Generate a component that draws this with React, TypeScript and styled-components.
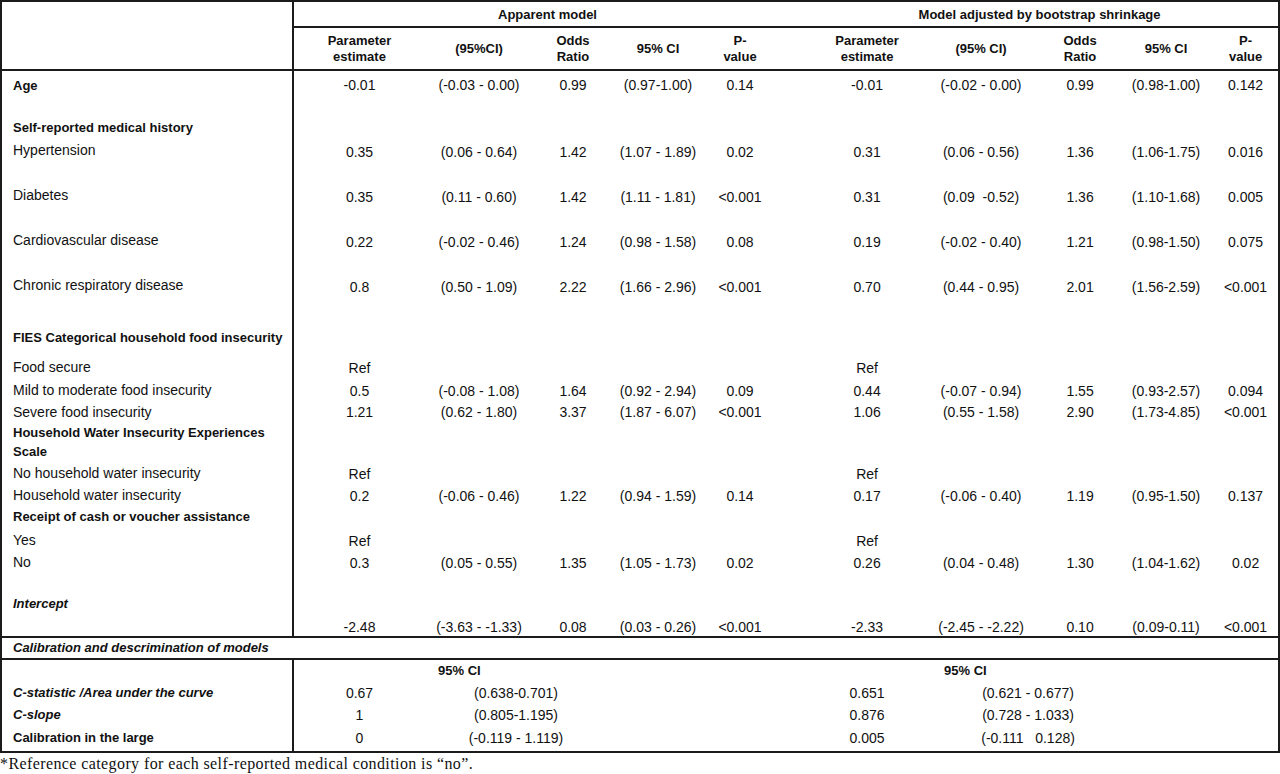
import React from 'react';
import styled, { createGlobalStyle } from 'styled-components';

const GlobalStyle = createGlobalStyle`
  html, body {
    margin: 0;
    padding: 0;
    background: #fff;
  }
`;

const LINE = '2px solid #1b1b1b';

// widths of the 11 columns: label + 5 apparent + 5 adjusted
const colWidths = [292, 132, 108, 80, 90, 98, 132, 96, 102, 70, 78];
// horizontal nudge of a column's centred text (P-value columns sit off-centre)
const colShift = [0, 0, 0, 0, 0, -12, 0, 0, 0, 0, 6];

interface Row {
  label: string;
  bold?: boolean;
  italic?: boolean;
  height: number;
  padTop?: number;
  valuesTop?: number;
  values?: string[];
}

const ref = ['Ref', '', '', '', '', 'Ref', '', '', '', ''];

const rows: Row[] = [
  {
    label: 'Age',
    bold: true,
    height: 46,
    padTop: 3,
    values: ['-0.01', '(-0.03 - 0.00)', '0.99', '(0.97-1.00)', '0.14', '-0.01', '(-0.02 - 0.00)', '0.99', '(0.98-1.00)', '0.142'],
  },
  { label: 'Self-reported medical history', bold: true, height: 23 },
  {
    label: 'Hypertension',
    height: 45,
    valuesTop: 2,
    values: ['0.35', '(0.06 - 0.64)', '1.42', '(1.07 - 1.89)', '0.02', '0.31', '(0.06 - 0.56)', '1.36', '(1.06-1.75)', '0.016'],
  },
  {
    label: 'Diabetes',
    height: 45,
    valuesTop: 2,
    values: ['0.35', '(0.11 - 0.60)', '1.42', '(1.11 - 1.81)', '<0.001', '0.31', '(0.09  -0.52)', '1.36', '(1.10-1.68)', '0.005'],
  },
  {
    label: 'Cardiovascular disease',
    height: 45,
    valuesTop: 2,
    values: ['0.22', '(-0.02 - 0.46)', '1.24', '(0.98 - 1.58)', '0.08', '0.19', '(-0.02 - 0.40)', '1.21', '(0.98-1.50)', '0.075'],
  },
  {
    label: 'Chronic respiratory disease',
    height: 52,
    valuesTop: 2,
    values: ['0.8', '(0.50 - 1.09)', '2.22', '(1.66 - 2.96)', '<0.001', '0.70', '(0.44 - 0.95)', '2.01', '(1.56-2.59)', '<0.001'],
  },
  { label: 'FIES Categorical household food insecurity', bold: true, height: 30 },
  { label: 'Food secure', height: 23, valuesTop: 1, values: ref },
  {
    label: 'Mild to moderate food insecurity',
    height: 22,
    valuesTop: 1,
    values: ['0.5', '(-0.08 - 1.08)', '1.64', '(0.92 - 2.94)', '0.09', '0.44', '(-0.07 - 0.94)', '1.55', '(0.93-2.57)', '0.094'],
  },
  {
    label: 'Severe food insecurity',
    height: 20,
    values: ['1.21', '(0.62 - 1.80)', '3.37', '(1.87 - 6.07)', '<0.001', '1.06', '(0.55 - 1.58)', '2.90', '(1.73-4.85)', '<0.001'],
  },
  { label: 'Household Water Insecurity Experiences Scale', bold: true, height: 41 },
  { label: 'No household water insecurity', height: 22, valuesTop: 1, values: ref },
  {
    label: 'Household water insecurity',
    height: 21,
    valuesTop: 1,
    values: ['0.2', '(-0.06 - 0.46)', '1.22', '(0.94 - 1.59)', '0.14', '0.17', '(-0.06 - 0.40)', '1.19', '(0.95-1.50)', '0.137'],
  },
  { label: 'Receipt of cash or voucher assistance', bold: true, height: 24 },
  { label: 'Yes', height: 22, valuesTop: 1, values: ref },
  {
    label: 'No',
    height: 41,
    valuesTop: 1,
    values: ['0.3', '(0.05 - 0.55)', '1.35', '(1.05 - 1.73)', '0.02', '0.26', '(0.04 - 0.48)', '1.30', '(1.04-1.62)', '0.02'],
  },
  {
    label: 'Intercept',
    bold: true,
    italic: true,
    height: 45,
    valuesTop: 24,
    values: ['-2.48', '(-3.63 - -1.33)', '0.08', '(0.03 - 0.26)', '<0.001', '-2.33', '(-2.45 - -2.22)', '0.10', '(0.09-0.11)', '<0.001'],
  },
];

interface CalRow {
  label: string;
  italic: boolean;
  height: number;
  est: [string, string];
  ci: [string, string];
}

const calRows: CalRow[] = [
  { label: 'C-statistic /Area under the curve', italic: true, height: 22, est: ['0.67', '0.651'], ci: ['(0.638-0.701)', '(0.621 - 0.677)'] },
  { label: 'C-slope', italic: true, height: 23, est: ['1', '0.876'], ci: ['(0.805-1.195)', '(0.728 - 1.033)'] },
  { label: 'Calibration in the large', italic: false, height: 26, est: ['0', '0.005'], ci: ['(-0.119 - 1.119)', '(-0.111   0.128)'] },
];

const Page = styled.div`
  width: 1280px;
  color: #111;
`;

const Table = styled.table`
  border-collapse: collapse;
  table-layout: fixed;
  width: 1279px;
  border: ${LINE};
  font-family: 'Liberation Sans', Arial, sans-serif;
  font-size: 14px;
`;

const HeadRow = styled.tr<{ $height: number }>`
  height: ${(p) => p.$height}px;
`;

const GroupHead = styled.th<{ $ruled?: boolean }>`
  padding: 0;
  font-size: 13px;
  font-weight: bold;
  text-align: center;
  vertical-align: middle;
  border-bottom: ${(p) => (p.$ruled ? LINE : 'none')};
`;

const ColHead = styled.th`
  padding: 0;
  font-size: 13px;
  font-weight: bold;
  line-height: 16px;
  text-align: center;
  vertical-align: middle;
  border-bottom: ${LINE};
  white-space: nowrap;
`;

const Corner = styled.th`
  padding: 0;
  border-right: ${LINE};
  border-bottom: ${LINE};
`;

const BodyRow = styled.tr<{ $height: number; $ruled?: boolean }>`
  height: ${(p) => p.$height}px;
  border-bottom: ${(p) => (p.$ruled ? LINE : 'none')};
`;

const Label = styled.td<{ $bold?: boolean; $italic?: boolean; $padTop?: number }>`
  padding: ${(p) => (p.$padTop ?? 0) + 2}px 6px 0 11px;
  vertical-align: top;
  border-right: ${LINE};
  font-size: ${(p) => (p.$bold ? '13px' : '14px')};
  font-weight: ${(p) => (p.$bold ? 'bold' : 'normal')};
  font-style: ${(p) => (p.$italic ? 'italic' : 'normal')};
  line-height: ${(p) => (p.$bold ? '19px' : '18px')};
`;

const Value = styled.td<{ $padTop?: number }>`
  padding: ${(p) => (p.$padTop ?? 0) + 2}px 0 0 0;
  vertical-align: top;
  text-align: center;
  line-height: 18px;
  white-space: pre;
`;

const Nudge = styled.span`
  display: inline-block;
`;

const Banner = styled.td`
  padding: 0 11px;
  height: 20px;
  font-size: 13px;
  font-weight: bold;
  font-style: italic;
  line-height: 20px;
  vertical-align: middle;
`;

const CiHead = styled.td`
  padding: 0 0 0 13px;
  font-size: 13px;
  font-weight: bold;
  line-height: 20px;
  text-align: left;
  white-space: nowrap;
`;

const Footnote = styled.p`
  margin: 1px 0 0 0;
  font-family: 'Liberation Serif', 'Times New Roman', serif;
  font-size: 16px;
  letter-spacing: 0.4px;
  line-height: 19px;
  color: #111;
`;

const Cell: React.FC<{ col: number; top?: number; children: React.ReactNode }> = ({ col, top, children }) => (
  <Value $padTop={top}>
    <Nudge style={{ transform: `translateX(${colShift[col]}px)` }}>{children}</Nudge>
  </Value>
);

const headers = [
  ['Parameter', 'estimate'],
  ['(95%CI)'],
  ['Odds', 'Ratio'],
  ['95% CI'],
  ['P-', 'value'],
  ['Parameter', 'estimate'],
  ['(95% CI)'],
  ['Odds', 'Ratio'],
  ['95% CI'],
  ['P-', 'value'],
];

const App: React.FC = () => {
  return (
    <Page>
      <GlobalStyle />
      <Table>
        <colgroup>
          {colWidths.map((w, i) => (
            <col key={i} style={{ width: w }} />
          ))}
        </colgroup>
        <thead>
          <HeadRow $height={26}>
            <Corner rowSpan={2} />
            <GroupHead colSpan={5} $ruled>
              Apparent model
            </GroupHead>
            <GroupHead colSpan={5} $ruled>
              Model adjusted by bootstrap shrinkage
            </GroupHead>
          </HeadRow>
          <HeadRow $height={43}>
            {headers.map((lines, i) => (
              <ColHead key={i}>
                <Nudge style={{ transform: `translateX(${colShift[i + 1]}px)` }}>
                  {lines.map((l, j) => (
                    <React.Fragment key={j}>
                      {j > 0 && <br />}
                      {l}
                    </React.Fragment>
                  ))}
                </Nudge>
              </ColHead>
            ))}
          </HeadRow>
        </thead>
        <tbody>
          {rows.map((r, i) => (
            <BodyRow key={i} $height={r.height} $ruled={i === rows.length - 1}>
              <Label $bold={r.bold} $italic={r.italic} $padTop={r.padTop}>
                {r.label}
              </Label>
              {Array.from({ length: 10 }).map((_, c) => (
                <Cell key={c} col={c + 1} top={(r.padTop ?? 0) + (r.valuesTop ?? 0)}>
                  {r.values?.[c] ?? ''}
                </Cell>
              ))}
            </BodyRow>
          ))}
          <BodyRow $height={20} $ruled>
            <Banner colSpan={11}>Calibration and descrimination of models</Banner>
          </BodyRow>
          <BodyRow $height={22}>
            <Label />
            <Value />
            <CiHead>95% CI</CiHead>
            <Value colSpan={4} />
            <CiHead style={{ paddingLeft: 11 }}>95% CI</CiHead>
            <Value colSpan={3} />
          </BodyRow>
          {calRows.map((r, i) => (
            <BodyRow key={i} $height={r.height}>
              <Label $bold $italic={r.italic}>
                {r.label}
              </Label>
              <Value $padTop={1}>{r.est[0]}</Value>
              <Value colSpan={2} $padTop={1}>
                <Nudge style={{ transform: 'translateX(-3px)' }}>{r.ci[0]}</Nudge>
              </Value>
              <Value colSpan={2} />
              <Value $padTop={1}>{r.est[1]}</Value>
              <Value colSpan={2} $padTop={1}>
                <Nudge style={{ transform: 'translateX(-4px)' }}>{r.ci[1]}</Nudge>
              </Value>
              <Value colSpan={2} />
            </BodyRow>
          ))}
        </tbody>
      </Table>
      <Footnote>*Reference category for each self-reported medical condition is “no”.</Footnote>
    </Page>
  );
};

export default App;
